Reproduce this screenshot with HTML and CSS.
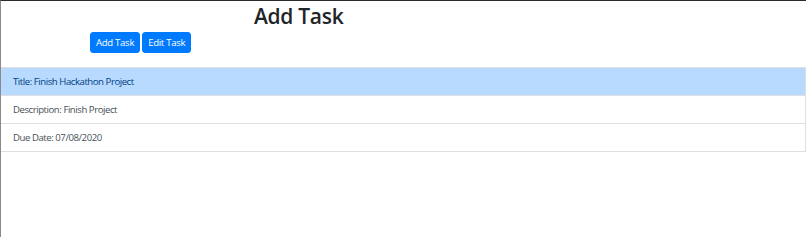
FILE: index.html
```html
<!DOCTYPE html>
<html>
<head>
<meta charset="utf-8">
<link rel="stylesheet" href="styles.css">
</head>
<body>
<div class="page">
  <header class="top">
    <h1 class="title">Add Task</h1>
    <div class="actions">
      <button class="btn">Add Task</button>
      <button class="btn">Edit Task</button>
    </div>
  </header>
  <ul class="list">
    <li class="item item-primary">Title: Finish Hackathon Project</li>
    <li class="item">Description: Finish Project</li>
    <li class="item">Due Date: 07/08/2020</li>
  </ul>
</div>
</body>
</html>
```
FILE: styles.css
```css
html, body {
  margin: 0;
  padding: 0;
  height: 100%;
  background: #fff;
}
body {
  font-family: "Open Sans", "Noto Sans", sans-serif;
  color: #212529;
}
.page {
  box-sizing: border-box;
  height: 100%;
  border-top: 1px solid #2a2a2a;
  border-left: 1px solid #8a8a8a;
}
.top {
  display: flex;
  flex-direction: column;
  height: 66px;
}
.title {
  margin: 0;
  padding-left: 253px;
  font-size: 21px;
  font-weight: 600;
  letter-spacing: -0.3px;
  line-height: 30px;
  color: #212529;
}
.actions {
  display: flex;
  gap: 2px;
  padding-left: 89px;
  margin-top: 1px;
}
.btn {
  font-family: "Open Sans", sans-serif;
  font-size: 9.6px;
  letter-spacing: -0.3px;
  line-height: 14px;
  padding: 3px 5px;
  height: 21px;
  background: #007bff;
  color: #fff;
  border: 1px solid #007bff;
  border-radius: 3px;
}
.list {
  list-style: none;
  margin: 0;
  padding: 0;
}
.item {
  font-size: 9.6px;
  letter-spacing: -0.45px;
  line-height: 14px;
  padding: 6.5px 12px;
  height: 14px;
  color: #495057;
  border: 1px solid #dfdfdf;
  border-left: none;
  border-top: none;
}
.item-primary {
  background: #b8daff;
  color: #004085;
  border-top: 1px solid #dfdfdf;
}
```
